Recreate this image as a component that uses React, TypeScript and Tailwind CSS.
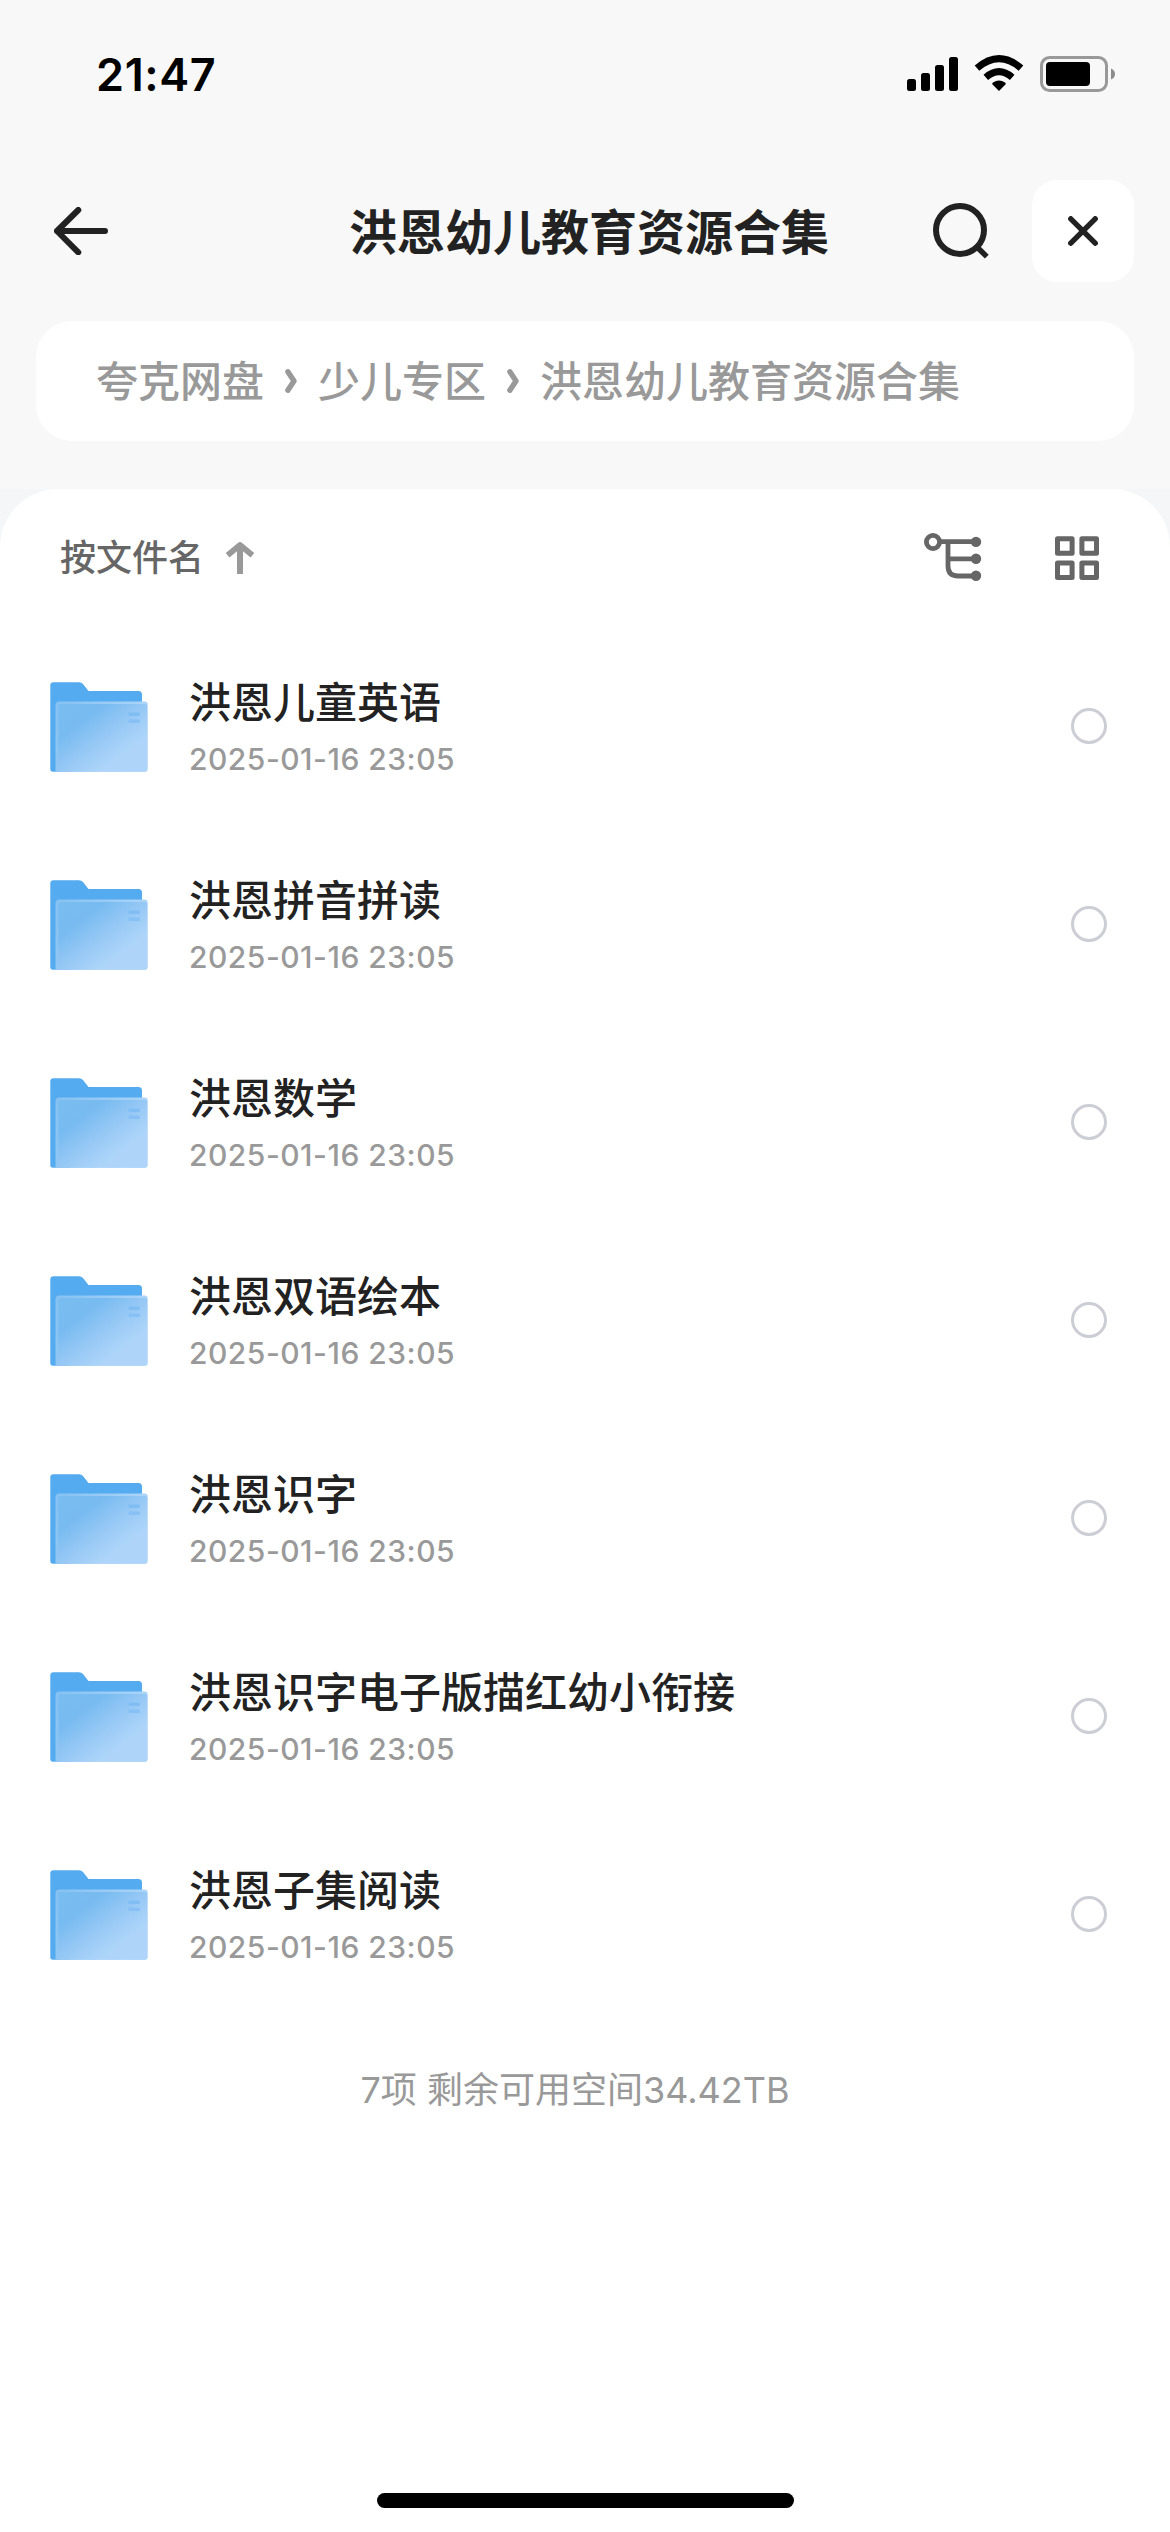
import React from "react";

const FILES = [
  "洪恩儿童英语",
  "洪恩拼音拼读",
  "洪恩数学",
  "洪恩双语绘本",
  "洪恩识字",
  "洪恩识字电子版描红幼小衔接",
  "洪恩子集阅读",
];

function StatusIcons() {
  return (
    <svg width="220" height="50" viewBox="900 48 220 50" fill="none">
      <g fill="#000">
        <rect x="907" y="79" width="9" height="12" rx="2.5" />
        <rect x="921" y="73" width="9" height="18" rx="2.5" />
        <rect x="935" y="65" width="9" height="26" rx="2.5" />
        <rect x="949" y="57" width="9" height="34" rx="2.5" />
        <path d="M999 91 L992.3 84.2 Q992 83.2 993 82.6 Q999 78.4 1005 82.6 Q1006 83.2 1005.7 84.2 Z" />
      </g>
      <path d="M977 68.2 Q999 49.2 1021 68.2" stroke="#000" strokeWidth="7" />
      <path d="M985.8 77.3 Q999 66 1012.2 77.3" stroke="#000" strokeWidth="7" />
      <rect x="1041.5" y="57.5" width="65" height="33" rx="8" stroke="#999" strokeWidth="3" />
      <rect x="1046" y="62" width="44" height="24" rx="4" fill="#000" />
      <path d="M1111 68.5 Q1115 70 1115 74 Q1115 78 1111 79.5 Z" fill="#8c8c8c" />
    </svg>
  );
}

function BackIcon() {
  return (
    <svg width="54" height="48" viewBox="54 207 54 48" fill="none" stroke="#222" strokeWidth="6" strokeLinecap="round" strokeLinejoin="round">
      <path d="M78.3 210 L57 231 L78.3 252.3 M57 231 H105" />
    </svg>
  );
}

function SearchIcon() {
  return (
    <svg width="58" height="58" viewBox="932 203 58 58" fill="none" stroke="#222" strokeWidth="6">
      <circle cx="960" cy="231" r="24" />
      <path d="M977.5 248.5 L986.8 257.6" strokeWidth="5.5" />
    </svg>
  );
}

function CloseIcon() {
  return (
    <svg width="30" height="30" viewBox="0 0 30 30" fill="none" stroke="#222" strokeWidth="5.4" strokeLinecap="round">
      <path d="M2.8 2.8 L27.2 27.2 M27.2 2.8 L2.8 27.2" />
    </svg>
  );
}

function Chevron() {
  return (
    <svg width="12" height="24" viewBox="0 0 12 24" fill="none" stroke="#999" strokeWidth="5.4" strokeLinecap="round" strokeLinejoin="round">
      <path d="M2.9 2.8 L9 12 L2.9 21.2" />
    </svg>
  );
}

function SortArrow() {
  return (
    <svg width="30" height="32" viewBox="0 0 30 32" fill="none" stroke="#999" strokeWidth="6">
      <path d="M15 32 V4" />
      <path d="M2.6 13.3 L15 3 L27.4 13.3" strokeWidth="5.8" strokeLinejoin="round" />
    </svg>
  );
}

function TreeIcon() {
  return (
    <svg width="60" height="52" viewBox="923 533 60 52" fill="none" stroke="#666" strokeWidth="4.8">
      <circle cx="933" cy="543" r="6.6" />
      <path d="M941 542.7 H976 M948 543 V567 Q948 577 958 577 H976 M948 559.8 H976" />
      <g fill="#666" stroke="none">
        <circle cx="976" cy="542.9" r="5.2" />
        <circle cx="976" cy="559.8" r="5.2" />
        <circle cx="976" cy="576.8" r="5.2" />
      </g>
    </svg>
  );
}

function GridIcon() {
  return (
    <svg width="44" height="44" viewBox="0 0 44 44" fill="none" stroke="#666" strokeWidth="5" strokeLinejoin="round">
      <rect x="2.5" y="2.7" width="14.6" height="14.6" />
      <rect x="26.9" y="2.7" width="14.6" height="14.6" />
      <rect x="2.5" y="26.9" width="14.6" height="14.6" />
      <rect x="26.9" y="26.9" width="14.6" height="14.6" />
    </svg>
  );
}

function FolderIcon() {
  return (
    <svg className="mt-[2px] block shrink-0" width="98" height="90" viewBox="0 0 98 90">
      <defs>
        <linearGradient id="front" x1="0.05" y1="0.1" x2="0.9" y2="0.95">
          <stop offset="0" stopColor="#78bcf0" />
          <stop offset="0.22" stopColor="#78bbf0" />
          <stop offset="0.5" stopColor="#96c8f5" />
          <stop offset="0.78" stopColor="#aed5f9" />
          <stop offset="1" stopColor="#aed5f9" />
        </linearGradient>
        <linearGradient id="edge" x1="0" y1="0" x2="1" y2="0.3">
          <stop offset="0" stopColor="#84c1f2" />
          <stop offset="1" stopColor="#b0d6f9" />
        </linearGradient>
      </defs>
      <path d="M3.5 0.3 H29 Q31.5 0.3 33 2 L38.5 9 H88.5 Q92 9 92 12.5 V50 H20 V89.7 H3 Q0.3 89.7 0.3 87 V3.5 Q0.3 0.3 3.5 0.3 Z" fill="#55abef" />
      <path d="M9 19.5 H94.5 Q97.7 19.5 97.7 22.5 V87 Q97.7 89.7 95 89.7 H5.5 V23 Q5.5 19.5 9 19.5 Z" fill="url(#edge)" />
      <path d="M10.5 22 H95 Q97.2 22 97.2 24.2 V87 Q97.2 89.7 95 89.7 H8.3 V24.2 Q8.3 22 10.5 22 Z" fill="url(#front)" />
      <rect x="78.5" y="30.5" width="11.2" height="3.4" fill="#80bdf3" />
      <rect x="78.5" y="37.5" width="11.2" height="3.4" fill="#86c0f4" />
    </svg>
  );
}

function FileRow({ name }: { name: string }) {
  return (
    <li className="flex h-[198px] items-center pl-[50px] pr-[63px]">
      <FolderIcon />
      <div className="ml-[41px] flex flex-1 flex-col pt-[7px]">
        <span className="text-[42px] font-medium leading-[60px] text-[#222]">{name}</span>
        <span className="mt-[-2px] font-['Inter'] text-[30px] font-medium leading-[56px] tracking-[0.5px] text-[#999]">2025-01-16 23:05</span>
      </div>
      <span className="size-9 rounded-full border-[3px] border-[#cdcdd5]" />
    </li>
  );
}

export default function App() {
  return (
    <div className="flex h-[2532px] w-[1170px] flex-col overflow-hidden bg-[#f4f6f8] font-['Inter','Noto_Sans_CJK_SC',sans-serif]">
      <div className="flex h-[489px] flex-col bg-[#f8f8f8]">
        <div className="flex h-[180px] items-start justify-between pl-[96px] pr-[50px] pt-[48px]">
          <span className="text-[45px] font-semibold leading-[54px] tracking-[0.6px] text-black">21:47</span>
          <StatusIcons />
        </div>
        <header className="flex h-[102px] items-center pl-[54px] pr-9">
          <BackIcon />
          <h1 className="ml-[241px] w-[583px] pt-[3px] text-[48px] font-bold leading-[60px] text-[#222]">洪恩幼儿教育资源合集</h1>
          <SearchIcon />
          <button className="ml-auto flex size-[102px] items-center justify-center rounded-[25px] bg-white">
            <CloseIcon />
          </button>
        </header>
        <nav className="mx-9 mt-[39px] flex h-[120px] items-center rounded-[36px] bg-white pl-[60px] text-[42px] font-medium text-[#999]">
          <span className="mr-[21px]">夸克网盘</span>
          <Chevron />
          <span className="ml-[21px] mr-[21px]">少儿专区</span>
          <Chevron />
          <span className="ml-[21px]">洪恩幼儿教育资源合集</span>
        </nav>
      </div>
      <main className="flex flex-1 flex-col rounded-t-[58px] bg-white">
        <div className="flex h-[138px] items-center pl-[60px] pr-[71px]">
          <span className="mr-[21px] text-[36px] font-medium text-[#666]">按文件名</span>
          <SortArrow />
          <div className="ml-auto flex items-center gap-[72px]">
            <TreeIcon />
            <GridIcon />
          </div>
        </div>
        <ul className="flex flex-col">
          {FILES.map((name) => (
            <FileRow key={name} name={name} />
          ))}
        </ul>
        <p className="mt-[50px] pr-[20px] text-center text-[36px] leading-[54px] text-[#999]">7项 剩余可用空间34.42TB</p>
        <div className="mx-auto mb-6 mt-auto h-[15px] w-[417px] rounded-full bg-black" />
      </main>
    </div>
  );
}
